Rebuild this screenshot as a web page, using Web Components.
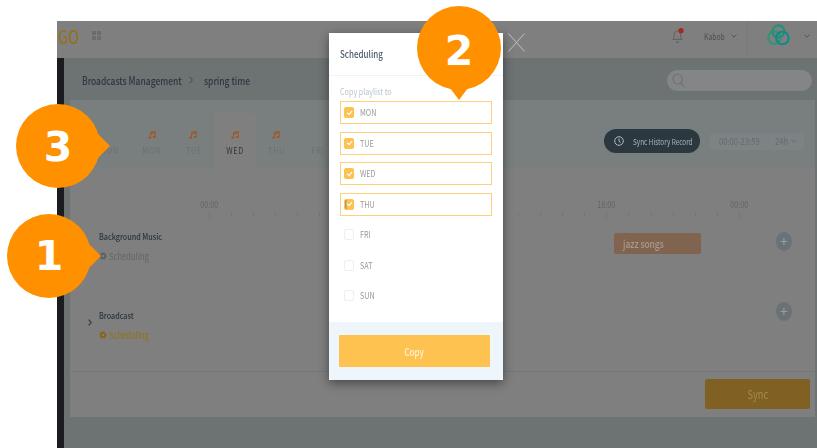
<!DOCTYPE html>
<html lang="en">
<head>
<meta charset="utf-8">
<title>Scheduling</title>
<style>
  html, body { margin: 0; height: 100%; background: #fff; overflow: hidden; }
  body { position: relative; font-family: "Noto Sans CJK SC", "Noto Sans", sans-serif; }
</style>
</head>
<body>
<app-shell>
  <top-bar slot="top"></top-bar>
  <crumb-bar></crumb-bar>
  <schedule-panel></schedule-panel>
</app-shell>

<copy-modal>
  <day-option checked>MON</day-option>
  <day-option checked>TUE</day-option>
  <day-option checked>WED</day-option>
  <day-option checked cursor>THU</day-option>
  <day-option>FRI</day-option>
  <day-option>SAT</day-option>
  <day-option>SUN</day-option>
</copy-modal>

<call-out n="3" dir="right" style="left:16px;top:104px;--dy:1px"></call-out>
<call-out n="1" dir="right" style="left:7px;top:214px"></call-out>
<call-out n="2" dir="down" style="left:417px;top:6px;--dy:3px"></call-out>

<script>
// the reference is squeezed sideways, so text gets narrowed with a transform
const SQUEEZE = `
  .t { display: inline-block; white-space: nowrap; transform: scaleX(var(--sx, .8)); transform-origin: 0 50%; }
  .t.c { transform-origin: 50% 50%; }
  .w { display: block; flex: none; white-space: nowrap; }
`;
const fixed = (text, width) => `<span class="w" style="width:${width}px"><span class="t">${text}</span></span>`;

const note = `<svg width="8" height="8" viewBox="0 0 8 8"><path d="M2.6 1.4 7.2.4v5.4M2.6 1.4v5.2M2.6 2.7l4.6-1" fill="none" stroke="#a4541f" stroke-width="1"/><ellipse cx="1.6" cy="6.8" rx="1.4" ry="1" fill="#a4541f"/><ellipse cx="6.2" cy="6" rx="1.4" ry="1" fill="#a4541f"/></svg>`;
const chevronDown = (c) => `<svg width="6" height="4" viewBox="0 0 6 4" style="flex:none"><path d="M.5.6 3 3.2 5.5.6" fill="none" stroke="${c}" stroke-width=".9"/></svg>`;
const gear = (c) => `<svg width="8" height="8" viewBox="0 0 8 8" style="flex:none"><circle cx="4" cy="4" r="2.1" fill="none" stroke="${c}" stroke-width="1.6"/><circle cx="4" cy="4" r="3.4" fill="none" stroke="${c}" stroke-width="1" stroke-dasharray="1.3 1.37"/></svg>`;

class AppShell extends HTMLElement {
  constructor() {
    super();
    this.attachShadow({ mode: 'open' });
    this.shadowRoot.innerHTML = `
      <style>
        :host {
          display: block;
          margin: 21px 0 0 57px;
          width: 760px;
          height: 427px;
          overflow: hidden;
          filter: blur(.3px);
        }
        .below { display: flex; height: 390px; background: #6d7273; }
        .rail { flex: none; width: 7px; background: #1b1c20; }
        .content { flex: 1; min-width: 0; }
      </style>
      <slot name="top"></slot>
      <div class="below">
        <div class="rail"></div>
        <div class="content"><slot></slot></div>
      </div>`;
  }
}

class TopBar extends HTMLElement {
  constructor() {
    super();
    this.attachShadow({ mode: 'open' });
    this.shadowRoot.innerHTML = `
      <style>
        ${SQUEEZE}
        :host { display: flex; align-items: center; height: 29px; padding-bottom: 8px; background: #7f7f7f; }
        .logo { font-size: 18px; color: #96700f; width: 35px; padding-left: 1px; box-sizing: border-box; line-height: 20px; }
        .apps { display: grid; grid-template-columns: 3.5px 3.5px; gap: 1.5px; }
        .apps i { width: 3.5px; height: 3.5px; background: #6c6c6c; }
        .right { margin-left: auto; display: flex; align-items: center; align-self: stretch; }
        .bell { margin-right: 20px; }
        .user { display: flex; align-items: center; gap: 7px; margin-right: 10px; font-size: 8.5px; color: #4e4e4e; }
        .org {
          align-self: stretch;
          display: flex; align-items: center;
          height: 29px; margin-bottom: -8px; padding: 0 7px 8px 19px;
          border-left: 1px solid #7a7a7a;
          gap: 14px;
        }
      </style>
      <div class="logo"><span class="t">GO</span></div>
      <div class="apps"><i></i><i></i><i></i><i></i></div>
      <div class="right">
        <svg class="bell" width="12" height="16" viewBox="0 0 12 16">
          <path d="M.8 11.4c1.2-.8 1.4-2 1.4-4.4 0-2.4 1.2-4 3.2-4 2 0 3.2 1.6 3.2 4 0 2.4.2 3.6 1.6 4.4z" fill="none" stroke="#616161" stroke-width="1"/>
          <path d="M4.2 14.2h2.6" stroke="#616161" stroke-width="1.4"/>
          <circle cx="9" cy="2.7" r="2.6" fill="#a8281e"/>
        </svg>
        <div class="user">${fixed('Kabob', 20)}${chevronDown('#4e4e4e')}</div>
        <div class="org">
          <svg width="23" height="23" viewBox="0 0 23 23" fill="none" stroke-width="2.1" style="margin-top:-1px">
            <circle cx="7.4" cy="13.6" r="6.2" stroke="#2f9672"/>
            <circle cx="11.4" cy="7.4" r="6" stroke="#25907a"/>
            <circle cx="15.4" cy="14" r="6.2" stroke="#0f8a8c"/>
          </svg>
          ${chevronDown('#4e4e4e')}
        </div>
      </div>`;
  }
}

class CrumbBar extends HTMLElement {
  constructor() {
    super();
    this.attachShadow({ mode: 'open' });
    this.shadowRoot.innerHTML = `
      <style>
        ${SQUEEZE}
        :host {
          --sx: .77;
          display: flex;
          align-items: center;
          box-sizing: border-box;
          height: 42px;
          padding: 2px 5px 0 18px;
          font-size: 11px;
          font-weight: 500;
          color: #2d3742;
        }
        .sep { margin: 0 11px 0 8px; display: flex; }
        .search {
          margin-left: auto;
          width: 145px;
          height: 21px;
          border-radius: 11px;
          background: #838586;
          display: flex;
          align-items: center;
          padding-left: 5px;
          box-sizing: border-box;
        }
      </style>
      ${fixed('Broadcasts Management', 99)}
      <span class="sep"><svg width="4" height="8" viewBox="0 0 4 8"><path d="M.5.7 3.4 4 .5 7.3" fill="none" stroke="#3c464f" stroke-width=".9"/></svg></span>
      ${fixed('spring time', 46)}
      <div class="search">
        <svg width="13" height="15" viewBox="0 0 13 15" fill="none" stroke="#6d7173" stroke-width="1.1"><ellipse cx="5.6" cy="6" rx="4.6" ry="5"/><path d="M8.8 9.8l3.4 4"/></svg>
      </div>`;
  }
}

class SchedulePanel extends HTMLElement {
  constructor() {
    super();
    this.attachShadow({ mode: 'open' });
    // SAT sits behind the modal, only its empty slot is needed
    const days = ['SUN', 'MON', 'TUE', 'WED', 'THU', 'FRI'];
    const tabs = days.map((d) => `
      <div class="tab ${d === 'WED' ? 'on' : ''}">
        <span class="ic">${d === 'SUN' || d === 'FRI' ? '' : note}</span>
        <span class="t c">${d}</span>
      </div>`).join('');
    const ticks = Array.from({ length: 25 }, () => '<i></i>').join('');
    this.shadowRoot.innerHTML = `
      <style>
        ${SQUEEZE}
        :host { display: block; margin: 0 2px 0 6px; height: 317px; background: #7f7f7f; }
        .strip { display: flex; align-items: flex-end; height: 68px; background: #797e7f; }
        .tabs { display: flex; margin-left: 20px; }
        .tab {
          width: 41.4px;
          height: 55px;
          box-sizing: border-box;
          padding-top: 18px;
          display: flex;
          flex-direction: column;
          align-items: center;
          font-size: 9px;
          line-height: 12px;
          letter-spacing: .9px;
          color: #6b7073;
          border-radius: 3px 3px 0 0;
        }
        .tab .ic { height: 8px; margin-bottom: 6px; display: flex; }
        .tab.on { background: #7f7f7f; color: #33383c; }
        .tools { margin-left: auto; margin-right: 11px; display: flex; align-items: center; gap: 10px; align-self: flex-start; margin-top: 29px; }
        .hist {
          width: 96px; height: 24px; border-radius: 12px;
          background: #2b3840;
          color: #aeb3b5;
          font-size: 8px;
          display: flex; align-items: center; gap: 9px;
          padding-left: 10px; box-sizing: border-box;
        }
        .range {
          width: 94px; height: 17px; border-radius: 3px;
          background: #7d8285;
          color: #666b6e;
          font-size: 9.5px;
          display: flex; align-items: center; padding-left: 9px; box-sizing: border-box;
        }
        .range .w + .w { margin-left: 12px; margin-right: 2px; }
        .main { box-sizing: border-box; height: 203px; padding-top: 30px; }
        .ruler { margin-left: 139px; width: 560px; }
        .hours { display: flex; margin-left: -66.5px; font-size: 9px; color: #646464; height: 13px; line-height: 13px; }
        .hours span.h { flex: 0 0 132.5px; text-align: center; }
        .ticks { display: flex; height: 8px; }
        .ticks i { flex: 0 0 22.08px; }
        .ticks i::before { content: ""; display: block; width: 1px; height: 4px; margin-top: 1px; background: #747474; }
        .ticks i:nth-child(6n+1)::before { height: 7px; }
        .lane { display: flex; align-items: flex-start; position: relative; height: 79px; }
        .lane.bg { margin-top: 12px; }
        .arrow { width: 29px; flex: none; padding-left: 18px; box-sizing: border-box; }
        .title { font-size: 9px; font-weight: 500; color: #2b333c; line-height: 12px; }
        .sched { display: flex; align-items: center; gap: 2px; font-size: 9.5px; margin-top: 7px; line-height: 12px; }
        .sched.grey { color: #616568; }
        .sched.gold { color: #94700f; }
        .labels { width: 515px; flex: none; }
        .block {
          width: 87px; height: 21px; margin-top: 2px; border-radius: 2px;
          background: #806450; color: #aa9a8e; font-size: 10.5px; font-weight: 500;
          display: flex; align-items: center; padding-left: 9px; box-sizing: border-box;
        }
        .plus {
          position: absolute; right: 23px; width: 16px; height: 19px; border-radius: 50%;
          background: #6b7277; color: #989da0; font-size: 14px; line-height: 18px; text-align: center;
        }
        .foot { display: flex; justify-content: flex-end; align-items: flex-start; box-sizing: border-box; height: 46px; border-top: 1px solid #767778; padding: 7px 5px 0 0; }
        .sync {
          width: 105px; height: 30px; border-radius: 2px; background: #806123; color: #a68c4d;
          font-size: 11.5px; display: flex; align-items: center; justify-content: center;
        }
      </style>
      <div class="strip">
        <div class="tabs">${tabs}</div>
        <div class="tools">
          <div class="hist">
            <svg width="10" height="10" viewBox="0 0 10 10" fill="none" stroke="#b4bbbe" stroke-width="1" style="flex:none"><circle cx="5" cy="5" r="4.3"/><path d="M5 2.4v3l1.6 1"/></svg>
            <span class="t">Sync History Record</span>
          </div>
          <div class="range">${fixed('00:00-23:59', 44)}${fixed('24h', 14)}${chevronDown('#666b6e')}</div>
        </div>
      </div>
      <div class="main">
        <div class="ruler">
          <div class="hours">
            <span class="h"><span class="t c">00:00</span></span>
            <span class="h"><span class="t c">06:00</span></span>
            <span class="h"><span class="t c">12:00</span></span>
            <span class="h"><span class="t c">18:00</span></span>
            <span class="h"><span class="t c">00:00</span></span>
          </div>
          <div class="ticks">${ticks}</div>
        </div>
        <div class="lane bg">
          <div class="arrow"></div>
          <div class="labels">
            <div class="title"><span class="t">Background Music</span></div>
            <div class="sched grey">${gear('#5a6066')}<span class="t">Scheduling</span></div>
          </div>
          <div class="block"><span class="t">jazz songs</span></div>
          <div class="plus" style="top:1px">+</div>
        </div>
        <div class="lane">
          <div class="arrow"><svg width="4" height="7" viewBox="0 0 4 7" style="display:block;margin-top:9px"><path d="M.6.6 3.2 3.5.6 6.4" fill="none" stroke="#2b333c" stroke-width="1.1"/></svg></div>
          <div class="labels">
            <div class="title"><span class="t">Broadcast</span></div>
            <div class="sched gold">${gear('#8a6510')}<span class="t">Scheduling</span></div>
          </div>
          <div class="plus" style="top:-8px">+</div>
        </div>
      </div>
      <div class="foot"><div class="sync"><span class="t c">Sync</span></div></div>`;
  }
}

class CopyModal extends HTMLElement {
  constructor() {
    super();
    this.attachShadow({ mode: 'open' });
    this.shadowRoot.innerHTML = `
      <style>
        ${SQUEEZE}
        :host {
          position: absolute;
          left: 329px; top: 33px;
          width: 174px; height: 347px;
          display: flex;
          flex-direction: column;
          background: #fff;
          box-shadow: 0 3px 10px rgba(0,0,0,.45);
          filter: blur(.3px);
        }
        header {
          height: 43px;
          box-sizing: border-box;
          border-bottom: 1px solid #eef3f8;
          padding: 13px 11px 0;
          font-size: 10px;
          font-weight: 500;
          line-height: 15px;
          color: #4a5b6b;
        }
        .close { position: absolute; left: 179px; top: 0; }
        .body { flex: 1; padding: 10px 11px 0; }
        .hint { font-size: 9px; color: #bcc4cc; line-height: 12px; margin-bottom: 3px; }
        .list { display: flex; flex-direction: column; gap: 7.5px; }
        footer {
          height: 58px;
          box-sizing: border-box;
          background: #eff6fb;
          padding: 13px 13px 13px 10px;
        }
        button {
          display: block;
          width: 100%;
          height: 32px;
          padding: 0;
          border: 0;
          border-radius: 1px;
          background: #fdc24f;
          color: #fff3d6;
          font: 500 10px "Noto Sans CJK SC", "Noto Sans", sans-serif;
        }
      </style>
      <svg class="close" width="17" height="19" viewBox="0 0 17 19"><path d="M.5.5 16.5 18.5M16.5.5 .5 18.5" stroke="#c4c7c8" stroke-width=".9"/></svg>
      <header><span class="t">Scheduling</span></header>
      <div class="body">
        <div class="hint"><span class="t">Copy playlist to</span></div>
        <div class="list"><slot></slot></div>
      </div>
      <footer><button><span class="t c">Copy</span></button></footer>`;
  }
}

class DayOption extends HTMLElement {
  constructor() {
    super();
    this.attachShadow({ mode: 'open' });
    this.shadowRoot.innerHTML = `
      <style>
        ${SQUEEZE}
        :host {
          display: flex;
          align-items: center;
          gap: 6px;
          height: 23px;
          box-sizing: border-box;
          width: 152px;
          padding-left: 3px;
          border: 1.5px solid transparent;
          font-size: 9px;
          color: #999;
        }
        :host([checked]) { border-color: #fdd27f; }
        .box {
          width: 10px; height: 11px; box-sizing: border-box;
          border: 1px solid #e8f1f7; border-radius: 2px;
          display: flex; align-items: center; justify-content: center;
        }
        :host([checked]) .box { background: #fdc24f; border-color: #fdc24f; }
        :host([cursor]) .box { box-shadow: inset 1.5px 0 0 #b39a66; }
        svg { display: none; }
        :host([checked]) svg { display: block; }
      </style>
      <span class="box"><svg width="7" height="6" viewBox="0 0 7 6"><path d="M1 2.6l2.2 2L6 1" fill="none" stroke="#fff" stroke-width="1.2"/></svg></span>
      <span class="t"><slot></slot></span>`;
  }
}

class CallOut extends HTMLElement {
  constructor() {
    super();
    this.attachShadow({ mode: 'open' });
    this.shadowRoot.innerHTML = `
      <style>
        :host {
          position: absolute;
          width: 84px; height: 84px;
          border-radius: 50%;
          background: #ff9100;
          color: #fff;
          display: flex; align-items: center; justify-content: center;
          font: 700 41px "DejaVu Sans", sans-serif;
        }
        span { transform: translateY(var(--dy, 0)); }
        .tail { position: absolute; background: #ff9100; }
        :host([dir="right"]) .tail { left: 78px; top: 26px; width: 16px; height: 32px; clip-path: polygon(0 0, 100% 50%, 0 100%); }
        :host([dir="down"]) .tail { left: 30px; top: 78px; width: 24px; height: 16px; clip-path: polygon(0 0, 100% 0, 50% 100%); }
      </style>
      <div class="tail"></div>
      <span></span>`;
  }
  connectedCallback() {
    this.shadowRoot.querySelector('span').textContent = this.getAttribute('n');
  }
}

customElements.define('app-shell', AppShell);
customElements.define('top-bar', TopBar);
customElements.define('crumb-bar', CrumbBar);
customElements.define('schedule-panel', SchedulePanel);
customElements.define('copy-modal', CopyModal);
customElements.define('day-option', DayOption);
customElements.define('call-out', CallOut);
</script>
</body>
</html>
